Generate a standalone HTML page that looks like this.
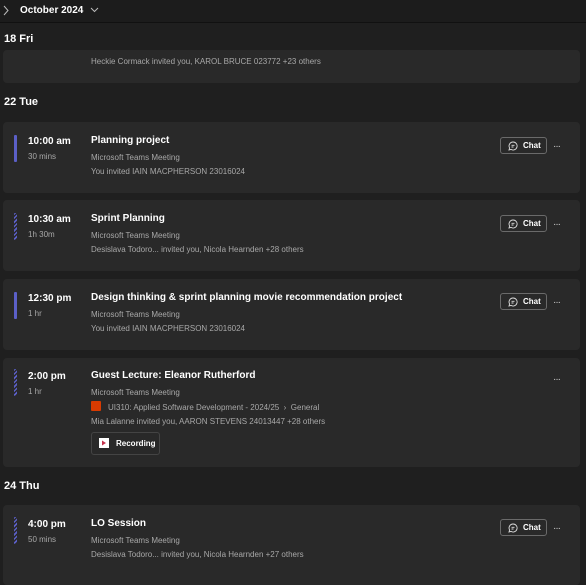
<!DOCTYPE html>
<html><head><meta charset="utf-8"><style>
*{margin:0;padding:0;box-sizing:border-box}
body{width:586px;height:577px;background:#1f1f1f;font-family:"Liberation Sans",sans-serif;color:#fff;position:relative;overflow:hidden}
.hdr{position:absolute;left:0;top:0;width:586px;height:23px;background:#1c1c1c;border-bottom:1px solid #111}
.abs{position:absolute;white-space:nowrap}
.day{font-size:11px;font-weight:bold;color:#fff}
.card{position:absolute;left:3px;width:577px;background:#292929;border-radius:4px}
.bar{position:absolute;left:11px;width:3px;background:#5b5fc7;border-radius:1px}
.tent{background:repeating-linear-gradient(135deg,#5b5fc7 0 1.5px,#292929 1.5px 3px)}
.time{position:absolute;left:25px;font-size:10px;font-weight:bold}
.dur{position:absolute;left:25px;font-size:8px;color:#a8a8a8}
.title{position:absolute;left:88px;font-size:10px;font-weight:bold;white-space:nowrap}
.sub{position:absolute;left:88px;font-size:8px;color:#a8a8a8;white-space:nowrap}
.chat{position:absolute;left:497px;width:47px;height:17px;border:1px solid #6a6a6a;border-radius:3px;font-size:8px;font-weight:bold;padding-left:22px;line-height:15px}
.chat svg{position:absolute;left:7px;top:3px}
.dots{position:absolute;left:550px;font-size:10px;color:#ccc;letter-spacing:-1px}
svg{display:block}
</style></head><body>
<div class="hdr">
<svg class="abs" style="left:3px;top:5px" width="6" height="11"><path d="M1 1l4 4.5-4 4.5" stroke="#bbb" fill="none"/></svg>
<div class="abs" style="left:20px;top:5px;font-size:10px;font-weight:bold">October 2024</div>
<svg class="abs" style="left:90px;top:7px" width="9" height="6"><path d="M1 1l3.5 3.5L8 1" stroke="#bbb" fill="none"/></svg>
</div>
<div class="abs day" style="left:4px;top:33px">18 Fri</div>
<div class="card" style="top:50px;height:33px"><div class="sub" style="top:7px">Heckie Cormack invited you, KAROL BRUCE 023772 +23 others</div></div>
<div class="abs day" style="left:4px;top:96px">22 Tue</div>

<div class="card" style="top:122px;height:71px">
<div class="bar" style="top:13px;height:27px"></div>
<div class="time" style="top:14px">10:00 am</div><div class="dur" style="top:30px">30 mins</div>
<div class="title" style="top:13px">Planning project</div>
<div class="sub" style="top:31px">Microsoft Teams Meeting</div>
<div class="sub" style="top:45px">You invited IAIN MACPHERSON 23016024</div>
<div class="chat" style="top:15px"><svg width="10" height="10"><path d="M5 1a4 4 0 1 1-2 7.4L1 9l.6-2A4 4 0 0 1 5 1zM3.5 4.3h3M3.5 6h2" stroke="#ddd" fill="none" stroke-width=".9"/></svg>Chat</div>
<div class="dots" style="top:19px">···</div>
</div>

<div class="card" style="top:200px;height:71px">
<div class="bar tent" style="top:13px;height:27px"></div>
<div class="time" style="top:14px">10:30 am</div><div class="dur" style="top:30px">1h 30m</div>
<div class="title" style="top:13px">Sprint Planning</div>
<div class="sub" style="top:31px">Microsoft Teams Meeting</div>
<div class="sub" style="top:45px">Desislava Todoro... invited you, Nicola Hearnden +28 others</div>
<div class="chat" style="top:15px"><svg width="10" height="10"><path d="M5 1a4 4 0 1 1-2 7.4L1 9l.6-2A4 4 0 0 1 5 1zM3.5 4.3h3M3.5 6h2" stroke="#ddd" fill="none" stroke-width=".9"/></svg>Chat</div>
<div class="dots" style="top:19px">···</div>
</div>

<div class="card" style="top:279px;height:71px">
<div class="bar" style="top:13px;height:27px"></div>
<div class="time" style="top:14px">12:30 pm</div><div class="dur" style="top:30px">1 hr</div>
<div class="title" style="top:13px">Design thinking &amp; sprint planning movie recommendation project</div>
<div class="sub" style="top:31px">Microsoft Teams Meeting</div>
<div class="sub" style="top:45px">You invited IAIN MACPHERSON 23016024</div>
<div class="chat" style="top:14px"><svg width="10" height="10"><path d="M5 1a4 4 0 1 1-2 7.4L1 9l.6-2A4 4 0 0 1 5 1zM3.5 4.3h3M3.5 6h2" stroke="#ddd" fill="none" stroke-width=".9"/></svg>Chat</div>
<div class="dots" style="top:18px">···</div>
</div>

<div class="card" style="top:358px;height:109px">
<div class="bar tent" style="top:11px;height:27px"></div>
<div class="time" style="top:13px">2:00 pm</div><div class="dur" style="top:29px">1 hr</div>
<div class="title" style="top:12px">Guest Lecture: Eleanor Rutherford</div>
<div class="sub" style="top:30px">Microsoft Teams Meeting</div>
<div class="abs" style="left:88px;top:43px;width:10px;height:10px;background:#d83b01;border-radius:1px"></div>
<div class="sub" style="left:105px;top:45px">UI310: Applied Software Development - 2024/25 &nbsp;›&nbsp; General</div>
<div class="sub" style="top:59px">Mia Lalanne invited you, AARON STEVENS 24013447 +28 others</div>
<div class="abs" style="left:88px;top:74px;width:69px;height:23px;border:1px solid #444;border-radius:3px;font-size:8px;font-weight:bold;line-height:21px;padding-left:24px">Recording</div>
<div class="abs" style="left:96px;top:80px;width:10px;height:10px;background:#fff"><svg width="10" height="10"><path d="M3 2.5v5l4-2.5z" fill="#c4314b"/></svg></div>
<div class="dots" style="top:16px">···</div>
</div>

<div class="abs day" style="left:4px;top:480px">24 Thu</div>
<div class="card" style="top:505px;height:80px">
<div class="bar tent" style="top:12px;height:27px"></div>
<div class="time" style="top:14px">4:00 pm</div><div class="dur" style="top:30px">50 mins</div>
<div class="title" style="top:13px">LO Session</div>
<div class="sub" style="top:31px">Microsoft Teams Meeting</div>
<div class="sub" style="top:45px">Desislava Todoro... invited you, Nicola Hearnden +27 others</div>
<div class="chat" style="top:14px"><svg width="10" height="10"><path d="M5 1a4 4 0 1 1-2 7.4L1 9l.6-2A4 4 0 0 1 5 1zM3.5 4.3h3M3.5 6h2" stroke="#ddd" fill="none" stroke-width=".9"/></svg>Chat</div>
<div class="dots" style="top:18px">···</div>
</div>
</body></html>
